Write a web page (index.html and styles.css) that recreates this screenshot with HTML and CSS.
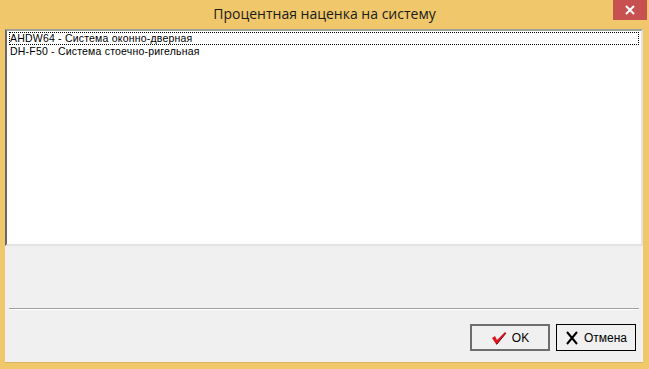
FILE: index.html
```html
<!DOCTYPE html>
<html lang="ru">
<head>
  <meta charset="UTF-8">
  <title>Процентная наценка на систему</title>
  <link rel="stylesheet" href="styles.css">
</head>
<body>
  <div class="window">
    <div class="titlebar">
      <span class="title">Процентная наценка на систему</span>
      <button class="close-btn" title="Закрыть">
        <svg width="10" height="10" viewBox="0 0 10 10">
          <path d="M1 1 L9 9 M9 1 L1 9" stroke="#fff" stroke-width="2"/>
        </svg>
      </button>
    </div>

    <div class="client">
      <ul class="system-list">
        <li class="focused">AHDW64 - Система оконно-дверная</li>
        <li>DH-F50 - Система стоечно-ригельная</li>
      </ul>

      <div class="spacer"></div>
      <div class="separator"></div>

      <div class="buttons">
        <button class="dlg-btn default">
          <svg width="16" height="14" viewBox="0 0 16 14">
            <path d="M1 7 L4 5 L6 9 L14 1 L15 2 L6 13 L5 13 Z" fill="#e0141e"/>
            <path d="M5 13 L6 13 L15 2" stroke="#7a0008" stroke-width="1" fill="none"/>
          </svg>
          <span>OK</span>
        </button>
        <button class="dlg-btn">
          <svg width="14" height="14" viewBox="0 0 14 14">
            <path d="M2 1 L12 13 M12 1 L2 13" stroke="#000" stroke-width="2"/>
          </svg>
          <span>Отмена</span>
        </button>
      </div>
    </div>
  </div>
</body>
</html>
```

FILE: styles.css
```css
/* Dialog window */
body {
  margin: 0;
  padding: 0;
  background-color: #f0c86b;
  font-family: 'Liberation Sans', Arial, sans-serif;
}

.window {
  width: 649px;
  height: 369px;
  display: flex;
  flex-direction: column;
}

.titlebar {
  height: 29px;
  position: relative;
  text-align: center;
}

.title {
  display: inline-block;
  margin-top: 4px;
  font-family: 'Open Sans', 'Noto Sans', sans-serif;
  font-size: 14px;
  color: #1a1a1a;
}

.close-btn {
  position: absolute;
  top: 0;
  right: 2px;
  width: 34px;
  height: 20px;
  border: none;
  padding: 0;
  background-color: #c75050;
  display: flex;
  align-items: center;
  justify-content: center;
}

.client {
  margin: 0 6px 0 5px;
  height: 333px;
  background-color: #f0f0f0;
  border-bottom: 1px solid #d9b262;
  display: flex;
  flex-direction: column;
}

/* List box */
.system-list {
  list-style: none;
  margin: 0;
  padding: 1px 2px;
  height: 211px;
  background-color: #fff;
  border-top: 2px solid #a0a0a0;
  border-left: 2px solid #696969;
  border-right: 2px solid #e3e3e3;
  border-bottom: 2px solid #e3e3e3;
  font-size: 10.5px;
  letter-spacing: 0.2px;
  color: #000;
}

.system-list li {
  height: 13px;
  line-height: 13px;
  padding-left: 1px;
  white-space: nowrap;
}

.system-list li.focused {
  outline: 1px dotted #000;
  outline-offset: -1px;
}

.spacer {
  height: 62px;
}

.separator {
  margin: 0 4px 0 4px;
  border-top: 1px solid #a0a0a0;
  border-bottom: 1px solid #fff;
}

.buttons {
  display: flex;
  justify-content: flex-end;
  gap: 6px;
  padding: 14px 7px 0 0;
}

.dlg-btn {
  width: 80px;
  height: 27px;
  background-color: #f0f0f0;
  border: 1px solid #000;
  display: flex;
  align-items: center;
  justify-content: center;
  gap: 5px;
  font-family: 'Liberation Sans', Arial, sans-serif;
  font-size: 12px;
  color: #000;
  padding: 0;
}

.dlg-btn.default {
  border: 2px solid #6d6d6d;
}
```
